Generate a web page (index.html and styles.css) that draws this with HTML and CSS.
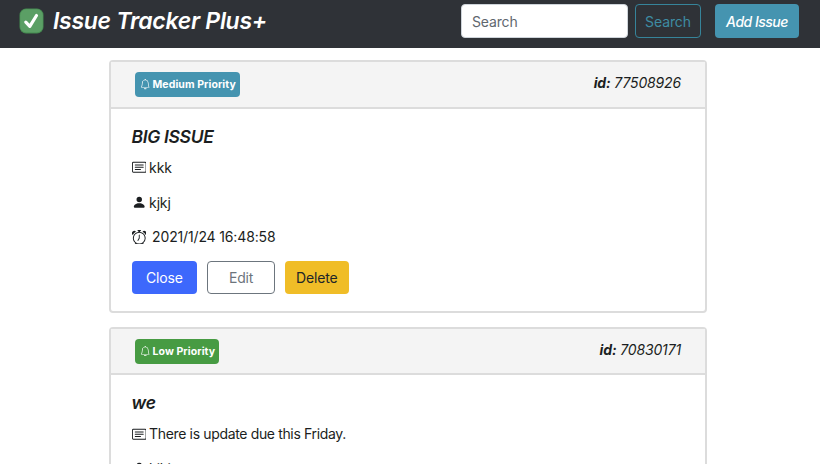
FILE: index.html
```html
<!DOCTYPE html>
<html lang="en">
<head>
<meta charset="utf-8">
<title>Issue Tracker Plus+</title>
<link rel="stylesheet" href="styles.css">
</head>
<body>
<svg class="defs" aria-hidden="true">
  <symbol id="bell" viewBox="0 0 16 16"><path d="M8 16a2 2 0 0 0 2-2H6a2 2 0 0 0 2 2z"/><path fill-rule="evenodd" d="M8 1.918l-.797.161A4.002 4.002 0 0 0 4 6c0 .628-.134 2.197-.459 3.742-.16.767-.376 1.566-.663 2.258h10.244c-.287-.692-.502-1.49-.663-2.258C12.134 8.197 12 6.628 12 6a4.002 4.002 0 0 0-3.203-3.920L8 1.917zM14.220 12c.223.447.481.801.780 1H1c.299-.199.557-.553.780-1C2.680 10.200 3 6.880 3 6c0-2.420 1.720-4.440 4.005-4.901a1 1 0 1 1 1.990 0A5.002 5.002 0 0 1 13 6c0 .880.320 4.200 1.220 6z"/></symbol>
  <symbol id="card-text" viewBox="0 0 16 16"><path fill-rule="evenodd" d="M14.500 3h-13a.5.5 0 0 0-.5.5v9a.5.5 0 0 0 .5.5h13a.5.5 0 0 0 .5-.5v-9a.5.5 0 0 0-.5-.5zm-13-1A1.500 1.500 0 0 0 0 3.500v9A1.500 1.500 0 0 0 1.500 14h13a1.500 1.500 0 0 0 1.500-1.500v-9A1.500 1.500 0 0 0 14.500 2h-13z"/><path d="M3.500 5h9a.5.5 0 0 1 0 1h-9a.5.5 0 0 1 0-1zm0 2.500h9a.5.5 0 0 1 0 1h-9a.5.5 0 0 1 0-1zm0 2.500h6a.5.5 0 0 1 0 1h-6a.5.5 0 0 1 0-1z"/></symbol>
  <symbol id="person" viewBox="0 0 16 16"><path d="M3 14s-1 0-1-1 1-4 6-4 6 3 6 4-1 1-1 1H3zm5-6a3 3 0 1 0 0-6 3 3 0 0 0 0 6z"/></symbol>
  <symbol id="alarm" viewBox="0 0 16 16"><path d="M8.500 5.500a.5.5 0 0 0-1 0v3.362l-1.429 2.380a.5.5 0 1 0 .858.515l1.500-2.500A.5.5 0 0 0 8.500 9V5.500z"/><path d="M6.500 0a.5.5 0 0 0 0 1H7v1.070a7.001 7.001 0 0 0-3.273 12.474l-.602.602a.5.5 0 0 0 .707.708l.746-.746A6.970 6.970 0 0 0 8 16a6.970 6.970 0 0 0 3.422-.892l.746.746a.5.5 0 0 0 .707-.708l-.601-.602A7.001 7.001 0 0 0 9 2.070V1h.5a.5.5 0 0 0 0-1h-3zm1.500 3a6 6 0 1 1 0 12 6 6 0 0 1 0-12zM.860 5.387A2.500 2.500 0 1 1 4.387 1.860 8.035 8.035 0 0 0 .860 5.387zM11.613 1.860a2.500 2.500 0 1 1 3.527 3.527 8.035 8.035 0 0 0-3.527-3.527z"/></symbol>
</svg>
<header class="navbar">
  <div class="brand">
    <svg class="logo" viewBox="0 0 25 26" aria-hidden="true"><rect x=".5" y=".5" width="24" height="25" rx="6.500" fill="#458a50"/><rect x="1.200" y="1.200" width="22.600" height="23.400" rx="6" fill="#5b9f65"/><path d="M6.800 14.200l4 4.100 6.700-10.800" fill="none" stroke="#fff" stroke-width="3.200" stroke-linecap="round" stroke-linejoin="round"/></svg>
    <span class="brand-name">Issue Tracker Plus+</span>
  </div>
  <form class="search">
    <input class="search-input" type="text" placeholder="Search">
    <button class="btn btn-search" type="button">Search</button>
    <button class="btn btn-add" type="button">Add Issue</button>
  </form>
</header>
<main class="issues">
  <article class="card">
    <div class="card-header">
      <span class="badge badge-medium"><svg class="bell"><use href="#bell"/></svg><span>Medium Priority</span></span>
      <span class="issue-id"><b>id:</b> 77508926</span>
    </div>
    <div class="card-body">
      <h2 class="title">BIG ISSUE</h2>
      <p class="row"><svg class="icon"><use href="#card-text"/></svg><span>kkk</span></p>
      <p class="row"><svg class="icon"><use href="#person"/></svg><span>kjkj</span></p>
      <p class="row row-date"><svg class="icon"><use href="#alarm"/></svg><span>2021/1/24 16:48:58</span></p>
      <div class="actions">
        <button class="btn btn-close" type="button">Close</button>
        <button class="btn btn-edit" type="button">Edit</button>
        <button class="btn btn-delete" type="button">Delete</button>
      </div>
    </div>
  </article>
  <article class="card">
    <div class="card-header">
      <span class="badge badge-low"><svg class="bell"><use href="#bell"/></svg><span>Low Priority</span></span>
      <span class="issue-id"><b>id:</b> 70830171</span>
    </div>
    <div class="card-body">
      <h2 class="title">we</h2>
      <p class="row"><svg class="icon"><use href="#card-text"/></svg><span class="description">There is update due this Friday.</span></p>
      <p class="row"><svg class="icon"><use href="#person"/></svg><span>kjkj</span></p>
    </div>
  </article>
</main>
</body>
</html>
```
FILE: styles.css
```css
* { box-sizing: border-box; }
body {
  margin: 0;
  height: 464px;
  overflow: hidden;
  background: #fff;
  color: #1b1e21;
  font: 14px/21px Inter, "Liberation Sans", sans-serif;
  letter-spacing: -0.15px;
}
.defs { display: none; }
svg { fill: currentColor; flex: none; }
.navbar {
  display: flex;
  justify-content: space-between;
  height: 48px;
  padding: 4px 21px 0 19px;
  background: #2f3237;
}
.brand { display: flex; align-items: center; height: 34px; gap: 9px; color: #fff; }
.logo { width: 25px; height: 26px; }
.brand-name { font-size: 23px; font-style: italic; font-weight: 600; letter-spacing: -0.280px; }
.search { display: flex; margin: 0; height: 34px; }
.search-input, .btn {
  height: 34px;
  padding: 0;
  border: 1px solid transparent;
  border-radius: 4px;
  font: inherit;
  letter-spacing: inherit;
}
.search-input { width: 167px; padding: 0 10px; margin-right: 7px; border-color: #ced4da; background: #fff; }
.search-input::placeholder { color: #5f676e; opacity: 1; }
.btn-search { width: 66px; margin-right: 14px; border-color: #36849a; background: transparent; color: #3e8ca3; letter-spacing: -0.1px; }
.btn-add { width: 84px; background: #4594b0; color: #fff; font-style: italic; font-weight: 500; letter-spacing: -0.5px; }
.issues { width: 598px; margin: 12px 0 0 109px; }
.card { margin-bottom: 14px; border: 2px solid #dcdcdc; border-radius: 4px; height: 252.600px; }
.card-header {
  display: flex;
  align-items: flex-start;
  justify-content: space-between;
  height: 46.500px;
  padding: 10px 24px 0;
  border-bottom: 2px solid #dcdcdc;
  background: #f4f4f4;
}
.badge {
  display: flex;
  align-items: center;
  gap: 2px;
  height: 25px;
  padding: 0 4px 0 5px;
  border-radius: 4px;
  color: #fff;
  font-size: 10.500px;
  font-weight: 700;
  letter-spacing: 0.080px;
}
.badge-medium { background: #4594b0; }
.badge-low { background: #479b43; }
.bell { width: 10.500px; height: 10.500px; }
.issue-id { font-style: italic; }
.card-body { padding: 17px 20.600px 0; }
.title { margin: 0 0 10.200px; font-size: 17.500px; line-height: 21px; font-style: italic; font-weight: 600; letter-spacing: -0.350px; }
.row { display: flex; align-items: center; gap: 3px; height: 21px; margin: 0 0 13.900px; }
.row-date { gap: 6px; }
.description { letter-spacing: -0.350px; }
.icon { width: 14.500px; height: 14.500px; }
.actions { display: flex; gap: 10px; }
.actions .btn { height: 33px; }
.btn-close { width: 65.500px; background: #3d68fc; color: #fff; }
.actions .btn-edit { width: 68px; border-color: #6c757d; background: #fff; color: #6c757d; }
.btn-delete { width: 63.500px; background: #f0bd27; color: #212529; }
```
